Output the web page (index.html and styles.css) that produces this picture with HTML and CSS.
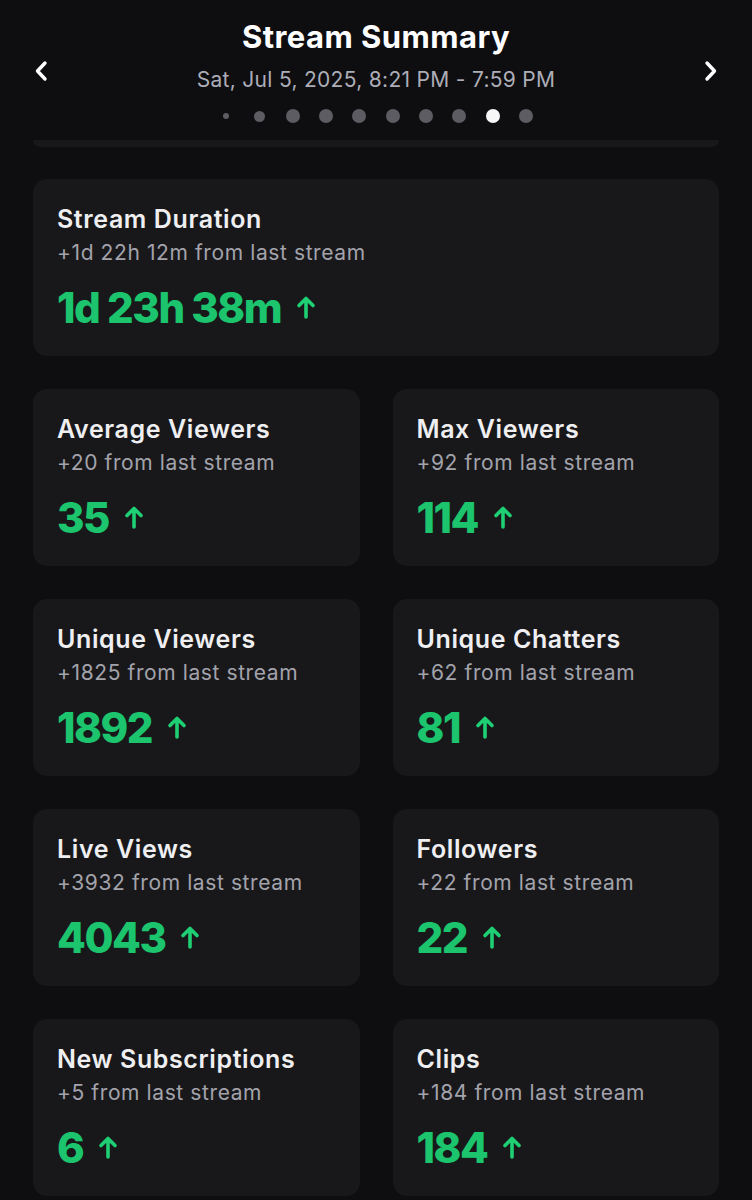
FILE: index.html
```html
<!DOCTYPE html>
<html>
<head>
<meta charset="utf-8">
<link rel="stylesheet" href="styles.css">
</head>
<body>
<header class="header">
  <svg class="chev" viewBox="0 0 14 22" width="14" height="22"><path d="M11 3 L3.5 11 L11 19" fill="none" stroke="#fff" stroke-width="3.4" stroke-linecap="round" stroke-linejoin="round"/></svg>
  <div class="head-center">
    <h1 class="title">Stream Summary</h1>
    <div class="date">Sat, Jul 5, 2025, 8:21 PM - 7:59 PM</div>
    <div class="dots">
      <span class="dot"><i class="d xs"></i></span>
      <span class="dot"><i class="d sm"></i></span>
      <span class="dot"><i class="d"></i></span>
      <span class="dot"><i class="d"></i></span>
      <span class="dot"><i class="d"></i></span>
      <span class="dot"><i class="d"></i></span>
      <span class="dot"><i class="d"></i></span>
      <span class="dot"><i class="d"></i></span>
      <span class="dot"><i class="d on"></i></span>
      <span class="dot"><i class="d"></i></span>
    </div>
  </div>
  <svg class="chev" viewBox="0 0 14 22" width="14" height="22"><path d="M3 3 L10.5 11 L3 19" fill="none" stroke="#fff" stroke-width="3.4" stroke-linecap="round" stroke-linejoin="round"/></svg>
</header>
<div class="peek"></div>
<main class="content">
  <section class="card">
    <div class="c-title">Stream Duration</div>
    <div class="c-sub">+1d 22h 12m from last stream</div>
    <div class="c-val">1d 23h 38m <svg class="up" viewBox="0 0 20 24" width="20" height="24"><path d="M10 22 V4 M3 10.5 L10 3.5 L17 10.5" fill="none" stroke="currentColor" stroke-width="3.6" stroke-linecap="round" stroke-linejoin="round"/></svg></div>
  </section>
  <div class="grid">
    <section class="card">
      <div class="c-title">Average Viewers</div>
      <div class="c-sub">+20 from last stream</div>
      <div class="c-val">35 <svg class="up" viewBox="0 0 20 24" width="20" height="24"><path d="M10 22 V4 M3 10.5 L10 3.5 L17 10.5" fill="none" stroke="currentColor" stroke-width="3.6" stroke-linecap="round" stroke-linejoin="round"/></svg></div>
    </section>
    <section class="card">
      <div class="c-title">Max Viewers</div>
      <div class="c-sub">+92 from last stream</div>
      <div class="c-val">114 <svg class="up" viewBox="0 0 20 24" width="20" height="24"><path d="M10 22 V4 M3 10.5 L10 3.5 L17 10.5" fill="none" stroke="currentColor" stroke-width="3.6" stroke-linecap="round" stroke-linejoin="round"/></svg></div>
    </section>
    <section class="card">
      <div class="c-title">Unique Viewers</div>
      <div class="c-sub">+1825 from last stream</div>
      <div class="c-val">1892 <svg class="up" viewBox="0 0 20 24" width="20" height="24"><path d="M10 22 V4 M3 10.5 L10 3.5 L17 10.5" fill="none" stroke="currentColor" stroke-width="3.6" stroke-linecap="round" stroke-linejoin="round"/></svg></div>
    </section>
    <section class="card">
      <div class="c-title">Unique Chatters</div>
      <div class="c-sub">+62 from last stream</div>
      <div class="c-val">81 <svg class="up" viewBox="0 0 20 24" width="20" height="24"><path d="M10 22 V4 M3 10.5 L10 3.5 L17 10.5" fill="none" stroke="currentColor" stroke-width="3.6" stroke-linecap="round" stroke-linejoin="round"/></svg></div>
    </section>
    <section class="card">
      <div class="c-title">Live Views</div>
      <div class="c-sub">+3932 from last stream</div>
      <div class="c-val">4043 <svg class="up" viewBox="0 0 20 24" width="20" height="24"><path d="M10 22 V4 M3 10.5 L10 3.5 L17 10.5" fill="none" stroke="currentColor" stroke-width="3.6" stroke-linecap="round" stroke-linejoin="round"/></svg></div>
    </section>
    <section class="card">
      <div class="c-title">Followers</div>
      <div class="c-sub">+22 from last stream</div>
      <div class="c-val">22 <svg class="up" viewBox="0 0 20 24" width="20" height="24"><path d="M10 22 V4 M3 10.5 L10 3.5 L17 10.5" fill="none" stroke="currentColor" stroke-width="3.6" stroke-linecap="round" stroke-linejoin="round"/></svg></div>
    </section>
    <section class="card">
      <div class="c-title">New Subscriptions</div>
      <div class="c-sub">+5 from last stream</div>
      <div class="c-val">6 <svg class="up" viewBox="0 0 20 24" width="20" height="24"><path d="M10 22 V4 M3 10.5 L10 3.5 L17 10.5" fill="none" stroke="currentColor" stroke-width="3.6" stroke-linecap="round" stroke-linejoin="round"/></svg></div>
    </section>
    <section class="card">
      <div class="c-title">Clips</div>
      <div class="c-sub">+184 from last stream</div>
      <div class="c-val">184 <svg class="up" viewBox="0 0 20 24" width="20" height="24"><path d="M10 22 V4 M3 10.5 L10 3.5 L17 10.5" fill="none" stroke="currentColor" stroke-width="3.6" stroke-linecap="round" stroke-linejoin="round"/></svg></div>
    </section>
  </div>
</main>
</body>
</html>
```
FILE: styles.css
```css
* { box-sizing: border-box; }
html, body { margin: 0; padding: 0; }
body {
  background: #0e0e10;
  color: #efeff1;
  font-family: Inter, "Noto Sans", sans-serif;
  width: 752px;
  height: 1200px;
  overflow: hidden;
}
.header {
  display: flex;
  align-items: center;
  justify-content: space-between;
  padding: 18px 34px 17px 34px;
  height: 140px;
}
.chev { display: block; }
.head-center {
  display: flex;
  flex-direction: column;
  align-items: center;
}
.title {
  margin: 0;
  font-size: 31px;
  line-height: 38px;
  font-weight: 700;
  letter-spacing: 0.45px;
  color: #ffffff;
}
.date {
  margin-top: 10px;
  font-size: 21px;
  line-height: 28px;
  color: #adadb8;
  letter-spacing: 0.3px;
}
.dots {
  margin-top: 15px;
  display: flex;
  gap: 19.33px;
}
.dot {
  width: 14px;
  height: 14px;
  display: flex;
  align-items: center;
  justify-content: center;
}
.d {
  display: block;
  width: 14px;
  height: 14px;
  border-radius: 50%;
  background: #5c5c62;
}
.d.sm { width: 11px; height: 11px; }
.d.xs { width: 6px; height: 6px; }
.d.on { background: #f7f7f8; }
.peek {
  margin: 0 33px;
  height: 7px;
  background: #18181b;
  border-radius: 0 0 8px 8px;
}
.content {
  padding: 32px 33px 0 33px;
  display: flex;
  flex-direction: column;
  gap: 33px;
}
.grid {
  display: grid;
  grid-template-columns: 1fr 1fr;
  column-gap: 33px;
  row-gap: 33px;
}
.card {
  background: #18181b;
  border-radius: 14px;
  height: 177px;
  padding: 25px 24px 0 24px;
}
.c-title {
  font-size: 25px;
  line-height: 30px;
  font-weight: 600;
  color: #efeff1;
  letter-spacing: 0.6px;
}
.c-sub {
  margin-top: 5px;
  font-size: 21px;
  line-height: 28px;
  color: #a3a3ab;
  letter-spacing: 0.6px;
}
.c-val {
  margin-top: 15px;
  font-size: 42px;
  line-height: 52px;
  font-weight: 800;
  color: #1bc46d;
  letter-spacing: -1.5px;
  display: flex;
  align-items: center;
  gap: 15px;
}
.up {
  color: #1fcf73;
  flex: none;
  margin-top: -2px;
}
```
